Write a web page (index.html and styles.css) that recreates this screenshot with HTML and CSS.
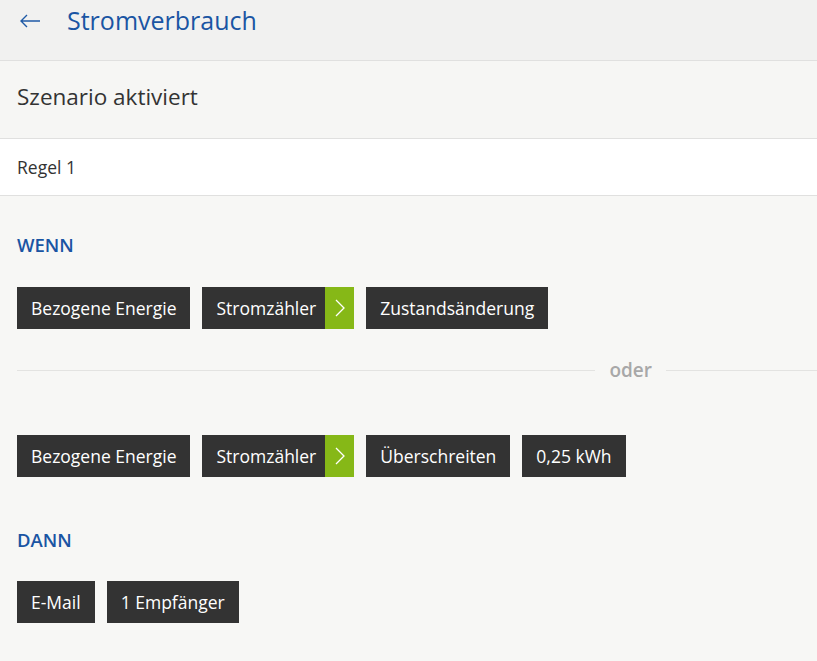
FILE: index.html
```html
<!DOCTYPE html>
<html lang="de">
<head>
<meta charset="utf-8">
<link rel="stylesheet" href="styles.css">
</head>
<body>
<header class="topbar">
  <svg class="back" width="22" height="14" viewBox="0 0 22 14"><path d="M21 7H2M8 1L2 7l6 6" fill="none" stroke="#1f5aa6" stroke-width="1.4"/></svg>
  <h1 class="title">Stromverbrauch</h1>
</header>
<section class="scenario">Szenario aktiviert</section>
<section class="rule">Regel 1</section>
<main class="content">
  <h2 class="label">WENN</h2>
  <div class="chips">
    <span class="chip">Bezogene Energie</span>
    <span class="chip chip-device">Stromzähler<span class="go"><svg width="10" height="18" viewBox="0 0 10 18"><path d="M1 1l8 8-8 8" fill="none" stroke="#fff" stroke-width="1.3"/></svg></span></span>
    <span class="chip">Zustandsänderung</span>
  </div>
  <div class="divider"><span class="line"></span><span class="or">oder</span><span class="line short"></span></div>
  <div class="chips second">
    <span class="chip">Bezogene Energie</span>
    <span class="chip chip-device">Stromzähler<span class="go"><svg width="10" height="18" viewBox="0 0 10 18"><path d="M1 1l8 8-8 8" fill="none" stroke="#fff" stroke-width="1.3"/></svg></span></span>
    <span class="chip">Überschreiten</span>
    <span class="chip">0,25 kWh</span>
  </div>
  <h2 class="label dann">DANN</h2>
  <div class="chips last">
    <span class="chip">E-Mail</span>
    <span class="chip">1 Empfänger</span>
  </div>
</main>
</body>
</html>
```
FILE: styles.css
```css
* { box-sizing: border-box; }
html, body { margin: 0; padding: 0; }
body {
  font-family: "Open Sans", "Noto Sans", sans-serif;
  background: #f7f7f5;
  color: #333;
  width: 817px;
  height: 661px;
  overflow: hidden;
}
.topbar {
  height: 61px;
  background: #f1f1f0;
  border-bottom: 1px solid #e0e0df;
  display: flex;
  align-items: flex-start;
  padding: 0 0 0 19px;
}
.back { margin-top: 14px; }
.title {
  margin: 4px 0 0 26px;
  font-size: 25px;
  font-weight: 400;
  color: #1a55a3;
  line-height: 32px;
}
.scenario {
  height: 78px;
  background: #f6f6f4;
  border-bottom: 1px solid #e0e0df;
  padding: 0 17px;
  font-size: 22.5px;
  line-height: 72px;
  color: #333;
}
.rule {
  height: 57px;
  background: #fff;
  border-bottom: 1px solid #e0e0df;
  padding: 0 17px;
  font-size: 17.5px;
  line-height: 56px;
  color: #333;
}
.content { padding: 38px 0 0 17px; }
.label {
  margin: 0;
  font-size: 18.5px;
  font-weight: 600;
  color: #1a55a3;
  line-height: 22px;
}
.chips {
  display: flex;
  gap: 12px;
  margin-top: 31px;
}
.chip {
  display: flex;
  align-items: center;
  height: 42px;
  background: #333;
  color: #fff;
  font-size: 17.5px;
  padding: 0 14px;
}
.chip-device { padding-right: 0; }
.go {
  display: flex;
  align-items: center;
  justify-content: center;
  width: 29px;
  height: 42px;
  margin-left: 9px;
  background: #86b817;
}
.divider {
  display: flex;
  align-items: center;
  margin-top: 31px;
  height: 20px;
}
.line { flex: 1; height: 1px; background: #e3e3e1; }
.line.short { flex: 0 0 151px; }
.or {
  padding: 0 14px;
  font-size: 19px;
  font-weight: 600;
  color: #a8a8a8;
}
.chips.second { margin-top: 55px; }
.dann { margin-top: 52px; }
.chips.last { margin-top: 30px; }
```
